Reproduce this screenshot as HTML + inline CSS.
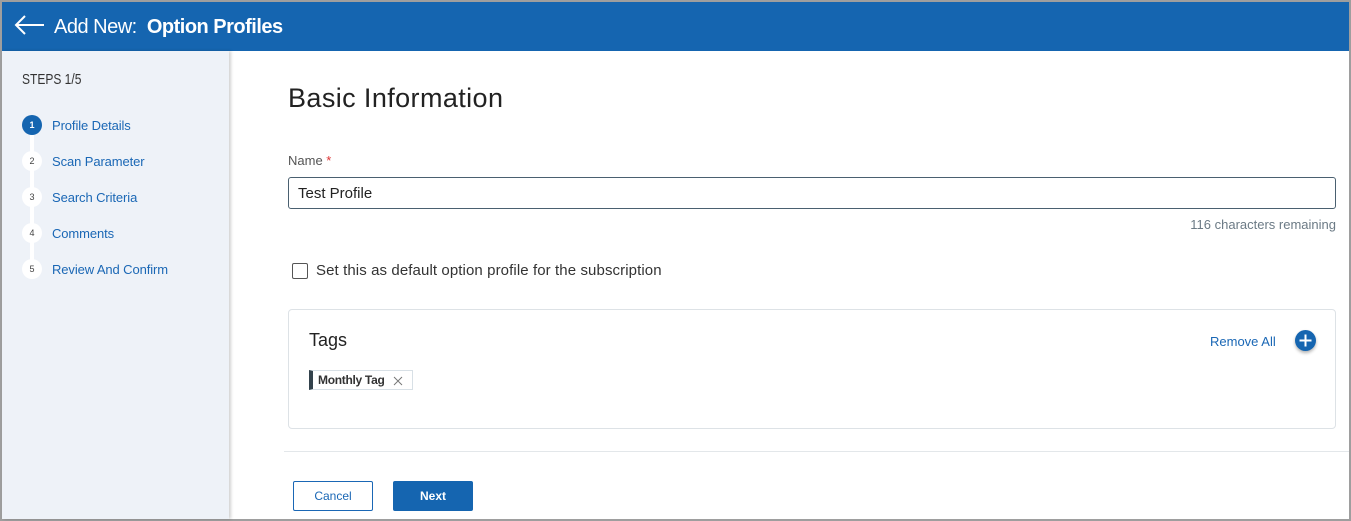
<!DOCTYPE html>
<html><head><style>
*{box-sizing:border-box;margin:0;padding:0}
body{width:1351px;height:521px;overflow:hidden;background:#fff;font-family:"Liberation Sans",Arial,sans-serif;position:relative}
.frame{position:absolute;left:0;top:0;width:1351px;height:521px;border:2px solid #9e9e9e}
.hdr{position:absolute;left:2px;top:2px;width:1347px;height:49px;background:#1565b0;color:#fff}
.hdr .t{position:absolute;left:52px;top:14px;font-size:20px;letter-spacing:-0.5px}
.side{position:absolute;left:2px;top:51px;width:227px;height:468px;background:#eef2f8;box-shadow:2px 0 3px rgba(0,0,0,.18)}
.steps{position:absolute;left:20px;top:20px;font-size:15px;color:#333;transform:scaleX(.8);transform-origin:left}
.line{position:absolute;left:28px;top:75px;width:4px;height:144px;background:#fff}
.st{position:absolute;left:20px;width:200px;height:20px}
.st .c{position:absolute;left:0;top:0;width:20px;height:20px;border-radius:50%;background:#fff;color:#444;font-size:9px;text-align:center;line-height:20px}
.st .c.a{background:#1565b0;color:#fff;font-weight:bold}
.st .l{position:absolute;left:30px;top:3px;font-size:13px;color:#1a67b5;letter-spacing:-0.1px}
h1{position:absolute;left:288px;top:83px;font-size:27px;font-weight:normal;color:#222;letter-spacing:0.4px}
.lab{position:absolute;left:288px;top:153px;font-size:13px;color:#555}
.inp{position:absolute;left:288px;top:177px;width:1048px;height:32px;border:1px solid #4a6070;border-radius:3px;font-size:15px;color:#222;padding:7px 9px}
.rem{position:absolute;right:15px;top:217px;font-size:13px;color:#6b7a85}
.cb{position:absolute;left:292px;top:263px;width:16px;height:16px;border:1.5px solid #555;border-radius:2px}
.cbl{position:absolute;left:316px;top:262px;font-size:15px;color:#333;letter-spacing:0.1px}
.card{position:absolute;left:288px;top:309px;width:1048px;height:120px;border:1px solid #dde2e6;border-radius:4px}
.card .tt{position:absolute;left:20px;top:20px;font-size:18px;color:#222}
.ra{position:absolute;left:921px;top:24px;font-size:13px;color:#1a67b5}
.plus{position:absolute;left:1006px;top:20px;width:21px;height:21px;border-radius:50%;background:#1565b0;box-shadow:0 2px 3px rgba(0,0,0,.3)}
.tag{position:absolute;left:20px;top:60px;height:20px;border:1px solid #d8e0e6;border-left:4px solid #33424c;padding:0 28px 0 5px;font-size:12px;color:#333;line-height:18px;font-weight:bold;letter-spacing:-0.3px}
.sep{position:absolute;left:284px;top:451px;width:1065px;height:1px;background:#e3e7ea}
.btn{position:absolute;top:481px;width:80px;height:30px;border-radius:2px;font-size:12px;text-align:center;line-height:28px}
</style></head><body>
<div class="frame"></div>
<div class="hdr">
<svg style="position:absolute;left:12px;top:13px" width="32" height="20" viewBox="0 0 32 20"><path d="M30 10H2M11 1L2 10l9 9" stroke="#fff" stroke-width="2" fill="none"/></svg>
<div class="t">Add New:&nbsp; <b>Option Profiles</b></div>
</div>
<div class="side">
<div class="steps">STEPS 1/5</div>
<div class="line"></div>
<div class="st" style="top:64px"><div class="c a">1</div><div class="l">Profile Details</div></div>
<div class="st" style="top:100px"><div class="c">2</div><div class="l">Scan Parameter</div></div>
<div class="st" style="top:136px"><div class="c">3</div><div class="l">Search Criteria</div></div>
<div class="st" style="top:172px"><div class="c">4</div><div class="l">Comments</div></div>
<div class="st" style="top:208px"><div class="c">5</div><div class="l">Review And Confirm</div></div>
</div>
<h1>Basic Information</h1>
<div class="lab">Name <span style="color:#d33">*</span></div>
<div class="inp">Test Profile</div>
<div class="rem">116 characters remaining</div>
<div class="cb"></div>
<div class="cbl">Set this as default option profile for the subscription</div>
<div class="card">
<div class="tt">Tags</div>
<div class="ra">Remove All</div>
<div class="plus"><svg width="21" height="21" viewBox="0 0 21 21"><path d="M10.5 4.5v12M4.5 10.5h12" stroke="#fff" stroke-width="2"/></svg></div>
<div class="tag">Monthly Tag<svg style="position:absolute;right:9px;top:5px" width="10" height="10" viewBox="0 0 10 10"><path d="M1 1l8 8M9 1L1 9" stroke="#777" stroke-width="1"/></svg></div>
</div>
<div class="sep"></div>
<div class="btn" style="left:293px;border:1px solid #1a67b5;color:#1a67b5;background:#fff">Cancel</div>
<div class="btn" style="left:393px;background:#1565b0;color:#fff;font-weight:bold;line-height:30px">Next</div>
</body></html>
